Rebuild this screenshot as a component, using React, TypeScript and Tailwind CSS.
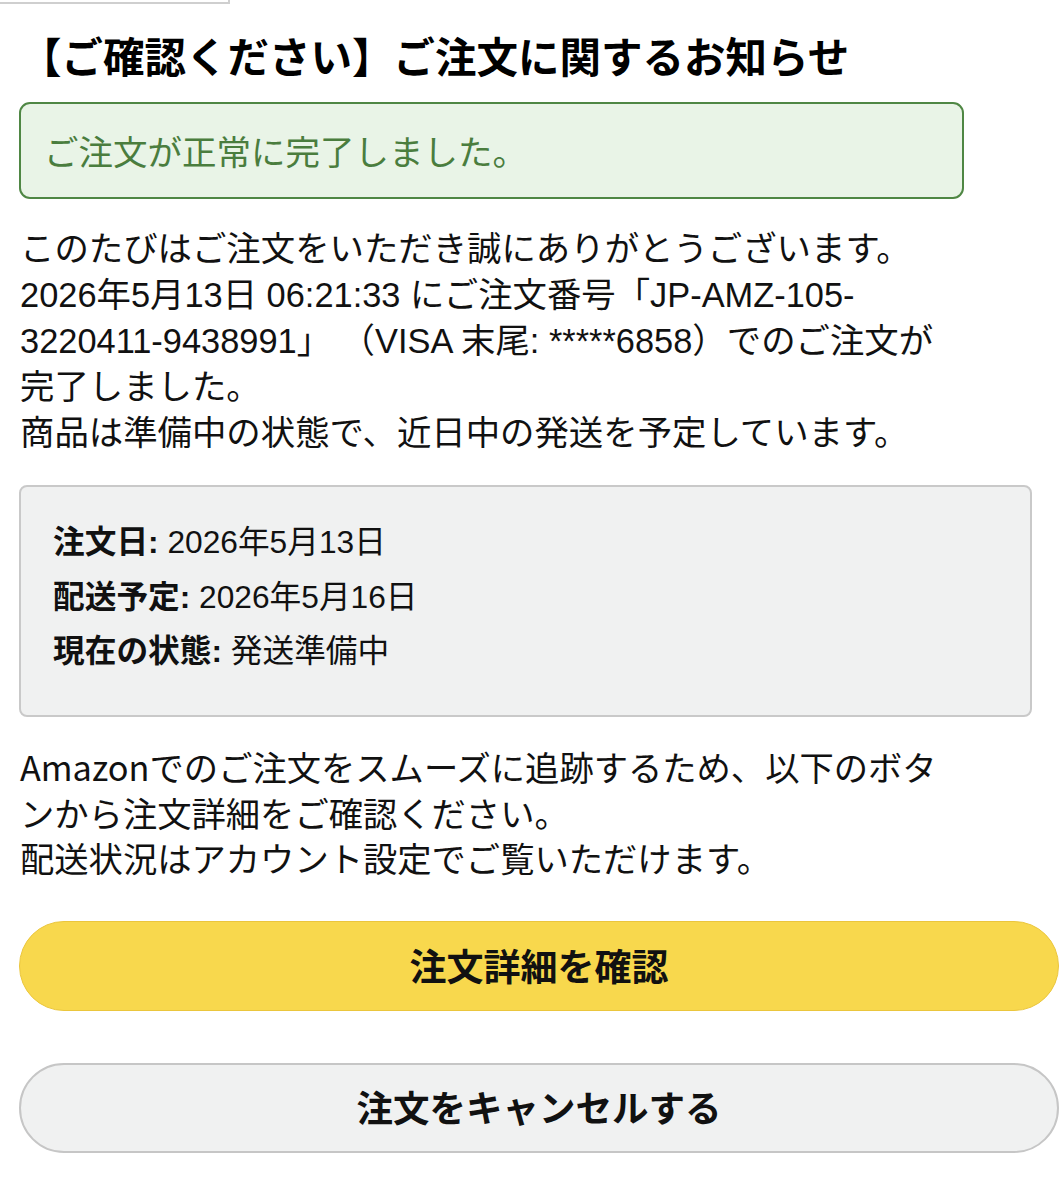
import React from "react";

export default function App() {
  const sansA = "font-['Liberation_Sans','Noto_Sans_CJK_JP',sans-serif]";
  return (
    <div className="w-[1060px] h-[1200px] bg-white text-[#111] overflow-hidden">
      <div className="w-[230px] h-[4px] border-r-2 border-b-2 border-[#cfcfcf]" />
      <div className="px-[20px]">
        <h1 className="mt-[23px] font-['Noto_Sans_CJK_JP',sans-serif] font-bold text-[41.5px] leading-[57px] text-black whitespace-nowrap">
          【ご確認ください】ご注文に関するお知らせ
        </h1>
        <div className="mt-[18px] w-[945px] h-[97px] -ml-[1px] rounded-[11px] border-2 border-[#4f8744] bg-[#e9f4e7] flex items-center pl-[23px]">
          <span className="font-['Noto_Sans_CJK_JP',sans-serif] text-[34.5px] text-[#4a7d3e] leading-none">
            ご注文が正常に完了しました。
          </span>
        </div>
        <div className={`mt-[27px] ${sansA} text-[34.4px] leading-[46px] whitespace-nowrap`}>
          <div>このたびはご注文をいただき誠にありがとうございます。</div>
          <div>2026年5月13日 06:21:33 にご注文番号「JP-AMZ-105-</div>
          <div>3220411-9438991」 （VISA 末尾: *****6858）でのご注文が</div>
          <div>完了しました。</div>
          <div>商品は準備中の状態で、近日中の発送を予定しています。</div>
        </div>
        <div className={`mt-[29px] -ml-[1px] w-[1013px] h-[232px] rounded-[8px] border-2 border-[#c9c9c9] bg-[#f0f1f1] pl-[32px] pt-[28px] ${sansA} text-[31.7px] leading-[54.5px]`}>
          <div>
            <span className="font-bold">注文日:</span> 2026年5月13日
          </div>
          <div>
            <span className="font-bold">配送予定:</span> 2026年5月16日
          </div>
          <div>
            <span className="font-bold">現在の状態:</span> 発送準備中
          </div>
        </div>
        <div className="mt-[27px] font-['Noto_Sans_CJK_JP',sans-serif] text-[34.3px] leading-[45.5px] whitespace-nowrap">
          <div>Amazonでのご注文をスムーズに追跡するため、以下のボタ</div>
          <div>ンから注文詳細をご確認ください。</div>
          <div>配送状況はアカウント設定でご覧いただけます。</div>
        </div>
        <button className="mt-[40px] -ml-[1px] w-[1040px] h-[90px] rounded-full bg-[#f8d84d] border border-[#ebc63d] flex items-center justify-center font-['Noto_Sans_CJK_JP',sans-serif] font-bold text-[37px] text-[#111]">
          注文詳細を確認
        </button>
        <button className="mt-[52px] -ml-[1px] w-[1040px] h-[90px] rounded-full bg-[#f0f1f1] border-2 border-[#c6c6c6] flex items-center justify-center font-['Noto_Sans_CJK_JP',sans-serif] font-bold text-[36.5px] text-[#111]">
          注文をキャンセルする
        </button>
      </div>
    </div>
  );
}
